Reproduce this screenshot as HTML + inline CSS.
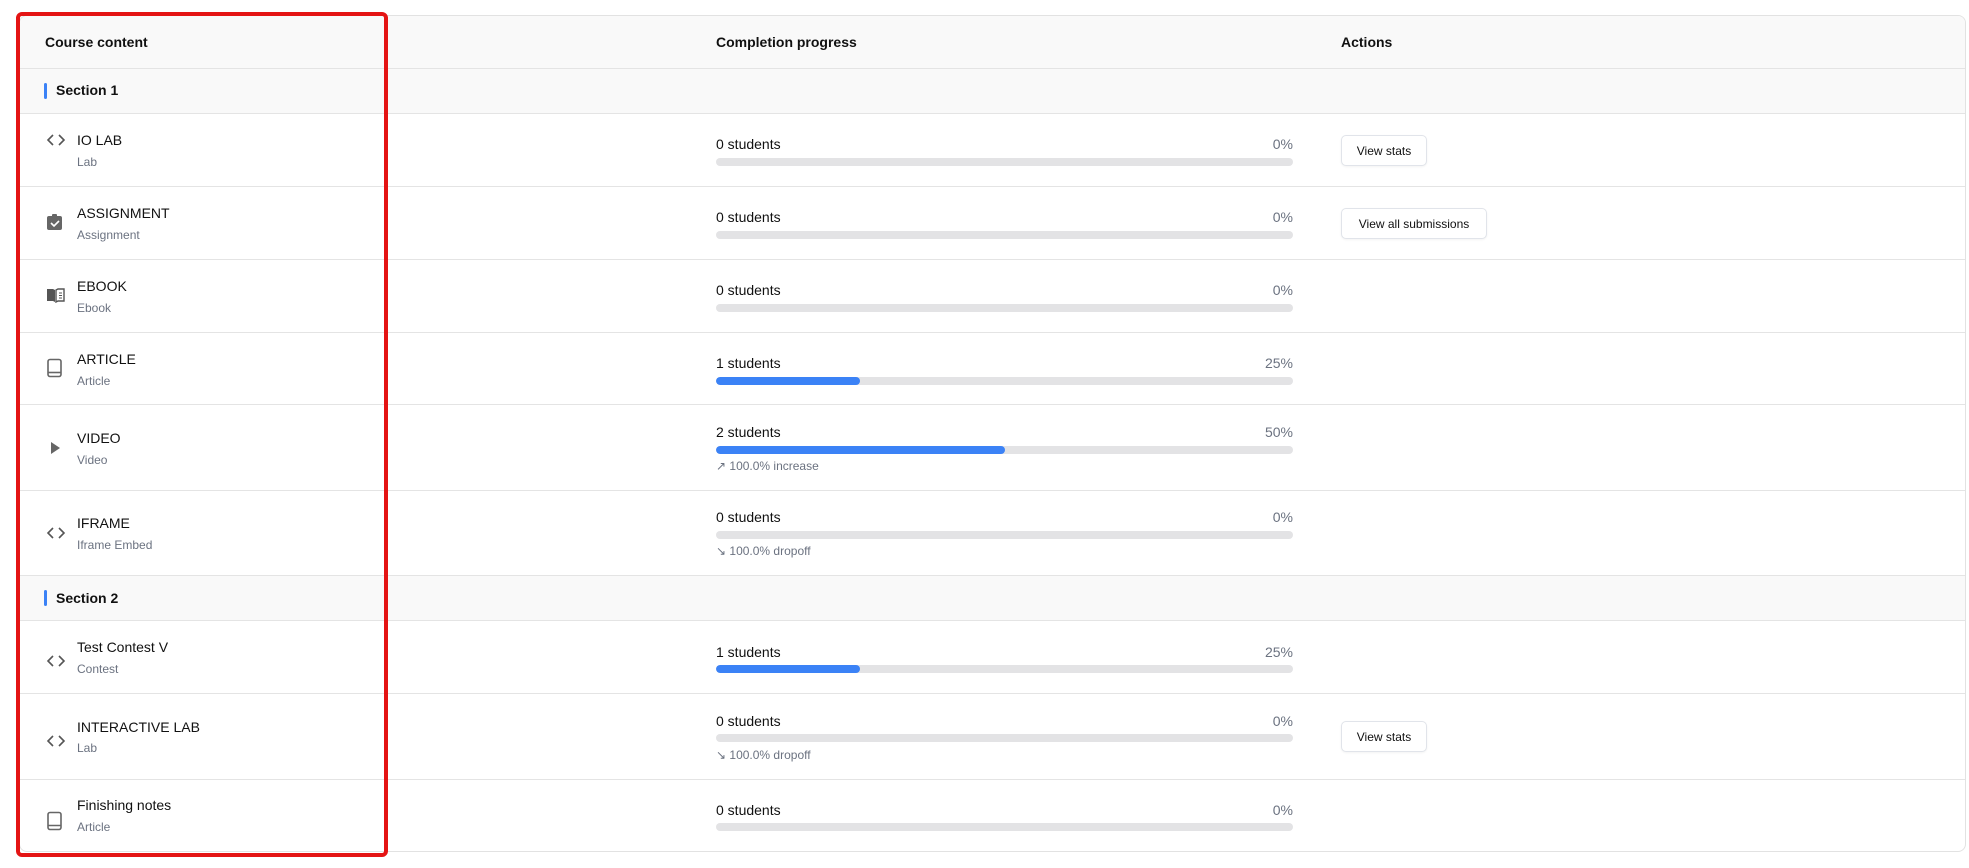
<!DOCTYPE html>
<html><head><meta charset="utf-8"><style>
*{box-sizing:border-box;margin:0;padding:0}
body{width:1969px;height:868px;background:#fff;font-family:"Liberation Sans",sans-serif;color:#111;position:relative;overflow:hidden}
.tbl{position:absolute;left:19px;top:15px;width:1947px;height:837px;border:1px solid #e2e2e2;border-radius:8px;overflow:hidden}
.a{position:absolute;white-space:nowrap}
.line{position:absolute;left:0;width:100%;height:1px;background:#e4e4e4}
.gray{position:absolute;left:0;width:100%;background:#f9f9f9}
.h{font-size:14px;font-weight:bold;color:#111}
.t{font-size:14px;color:#111}
.s{font-size:12px;color:#6b7280}
.st{font-size:14px;color:#111}
.pc{font-size:14px;color:#6b7280;text-align:right;width:60px}
.bar{position:absolute;left:696px;width:577px;height:8px;border-radius:4px;background:#e3e3e5;overflow:hidden}
.bar i{display:block;height:100%;background:#3b82f6;border-radius:4px}
.note{font-size:12px;color:#6b7280}
.btn{position:absolute;left:1321px;height:31px;border:1px solid #e1e4ea;border-radius:5px;font-size:12px;color:#111;display:flex;align-items:center;justify-content:center;background:#fff;box-shadow:0 1px 2px rgba(0,0,0,.05)}
.sec{position:absolute;left:24px;width:3px;height:16px;background:#3b82f6;border-radius:2px}
.ic{position:absolute;left:26px}
.red{position:absolute;left:16px;top:12px;width:372px;height:845px;border:4px solid #e41414;border-radius:6px}
</style></head><body>
<div class="tbl">
<div class="gray" style="top:0;height:52px"></div>
<div class="line" style="top:52px"></div>
<div class="gray" style="top:53px;height:44px"></div>
<div class="line" style="top:97px"></div>
<div class="line" style="top:170px"></div>
<div class="line" style="top:243px"></div>
<div class="line" style="top:316px"></div>
<div class="line" style="top:388px"></div>
<div class="line" style="top:474px"></div>
<div class="line" style="top:559px"></div>
<div class="gray" style="top:560px;height:44px"></div>
<div class="line" style="top:604px"></div>
<div class="line" style="top:677px"></div>
<div class="line" style="top:763px"></div>

<div class="a h" style="left:25px;top:18px">Course content</div>
<div class="a h" style="left:696px;top:18px">Completion progress</div>
<div class="a h" style="left:1321px;top:18px">Actions</div>

<div class="sec" style="top:67px"></div><div class="a h" style="left:36px;top:66px;font-weight:600">Section 1</div>
<div class="sec" style="top:574px"></div><div class="a h" style="left:36px;top:574px;font-weight:600">Section 2</div>

<svg class="ic" style="top:116px" width="20" height="16" viewBox="0 0 20 16"><path d="M7 3 2 8l5 5M13 3l5 5-5 5" fill="none" stroke="#555" stroke-width="1.6"/></svg>
<div class="a t" style="left:57px;top:116px">IO LAB</div><div class="a s" style="left:57px;top:139px">Lab</div>

<svg class="ic" style="top:197px" width="18" height="18" viewBox="0 0 18 18"><rect x="1" y="3" width="15" height="14" rx="2" fill="#666"/><rect x="6" y="1" width="5" height="4" rx="1" fill="#666"/><path d="M5 10l3 3 5-5" fill="none" stroke="#fff" stroke-width="1.6"/></svg>
<div class="a t" style="left:57px;top:189px">ASSIGNMENT</div><div class="a s" style="left:57px;top:212px">Assignment</div>

<svg class="ic" style="top:271px" width="20" height="16" viewBox="0 0 20 16"><path d="M1 2h6l2 1v12l-2-1H1z" fill="#555"/><path d="M10 3l2-1h6v12h-6l-2 1z" fill="none" stroke="#555" stroke-width="1.4"/><path d="M13 6h3M13 8.5h3M13 11h3" stroke="#555" stroke-width="1"/></svg>
<div class="a t" style="left:57px;top:262px">EBOOK</div><div class="a s" style="left:57px;top:285px">Ebook</div>

<svg class="ic" style="top:342px" width="18" height="20" viewBox="0 0 18 20"><rect x="2" y="1.5" width="13" height="17" rx="2" fill="none" stroke="#666" stroke-width="1.6"/><path d="M2 14.5h13" stroke="#666" stroke-width="1.6"/></svg>
<div class="a t" style="left:57px;top:335px">ARTICLE</div><div class="a s" style="left:57px;top:358px">Article</div>

<svg class="ic" style="top:424px" width="18" height="16" viewBox="0 0 18 16"><path d="M5 2l9 6-9 6z" fill="#666"/></svg>
<div class="a t" style="left:57px;top:414px">VIDEO</div><div class="a s" style="left:57px;top:437px">Video</div>

<svg class="ic" style="top:509px" width="20" height="16" viewBox="0 0 20 16"><path d="M7 3 2 8l5 5M13 3l5 5-5 5" fill="none" stroke="#555" stroke-width="1.6"/></svg>
<div class="a t" style="left:57px;top:499px">IFRAME</div><div class="a s" style="left:57px;top:522px">Iframe Embed</div>

<svg class="ic" style="top:637px" width="20" height="16" viewBox="0 0 20 16"><path d="M7 3 2 8l5 5M13 3l5 5-5 5" fill="none" stroke="#555" stroke-width="1.6"/></svg>
<div class="a t" style="left:57px;top:623px">Test Contest V</div><div class="a s" style="left:57px;top:646px">Contest</div>

<svg class="ic" style="top:717px" width="20" height="16" viewBox="0 0 20 16"><path d="M7 3 2 8l5 5M13 3l5 5-5 5" fill="none" stroke="#555" stroke-width="1.6"/></svg>
<div class="a t" style="left:57px;top:703px">INTERACTIVE LAB</div><div class="a s" style="left:57px;top:725px">Lab</div>

<svg class="ic" style="top:795px" width="18" height="20" viewBox="0 0 18 20"><rect x="2" y="1.5" width="13" height="17" rx="2" fill="none" stroke="#666" stroke-width="1.6"/><path d="M2 14.5h13" stroke="#666" stroke-width="1.6"/></svg>
<div class="a t" style="left:57px;top:781px">Finishing notes</div><div class="a s" style="left:57px;top:804px">Article</div>

<div class="a st" style="left:696px;top:120px">0 students</div><div class="a pc" style="left:1213px;top:120px">0%</div><div class="bar" style="top:142px"></div>
<div class="a st" style="left:696px;top:193px">0 students</div><div class="a pc" style="left:1213px;top:193px">0%</div><div class="bar" style="top:215px"></div>
<div class="a st" style="left:696px;top:266px">0 students</div><div class="a pc" style="left:1213px;top:266px">0%</div><div class="bar" style="top:288px"></div>
<div class="a st" style="left:696px;top:339px">1 students</div><div class="a pc" style="left:1213px;top:339px">25%</div><div class="bar" style="top:361px"><i style="width:25%"></i></div>
<div class="a st" style="left:696px;top:408px">2 students</div><div class="a pc" style="left:1213px;top:408px">50%</div><div class="bar" style="top:430px"><i style="width:50%"></i></div>
<div class="a note" style="left:696px;top:443px">↗ 100.0% increase</div>
<div class="a st" style="left:696px;top:493px">0 students</div><div class="a pc" style="left:1213px;top:493px">0%</div><div class="bar" style="top:515px"></div>
<div class="a note" style="left:696px;top:528px">↘ 100.0% dropoff</div>
<div class="a st" style="left:696px;top:628px">1 students</div><div class="a pc" style="left:1213px;top:628px">25%</div><div class="bar" style="top:649px"><i style="width:25%"></i></div>
<div class="a st" style="left:696px;top:697px">0 students</div><div class="a pc" style="left:1213px;top:697px">0%</div><div class="bar" style="top:718px"></div>
<div class="a note" style="left:696px;top:732px">↘ 100.0% dropoff</div>
<div class="a st" style="left:696px;top:786px">0 students</div><div class="a pc" style="left:1213px;top:786px">0%</div><div class="bar" style="top:807px"></div>

<div class="btn" style="top:119px;width:86px">View stats</div>
<div class="btn" style="top:192px;width:146px">View all submissions</div>
<div class="btn" style="top:705px;width:86px">View stats</div>
</div>
<div class="red"></div>
</body></html>
